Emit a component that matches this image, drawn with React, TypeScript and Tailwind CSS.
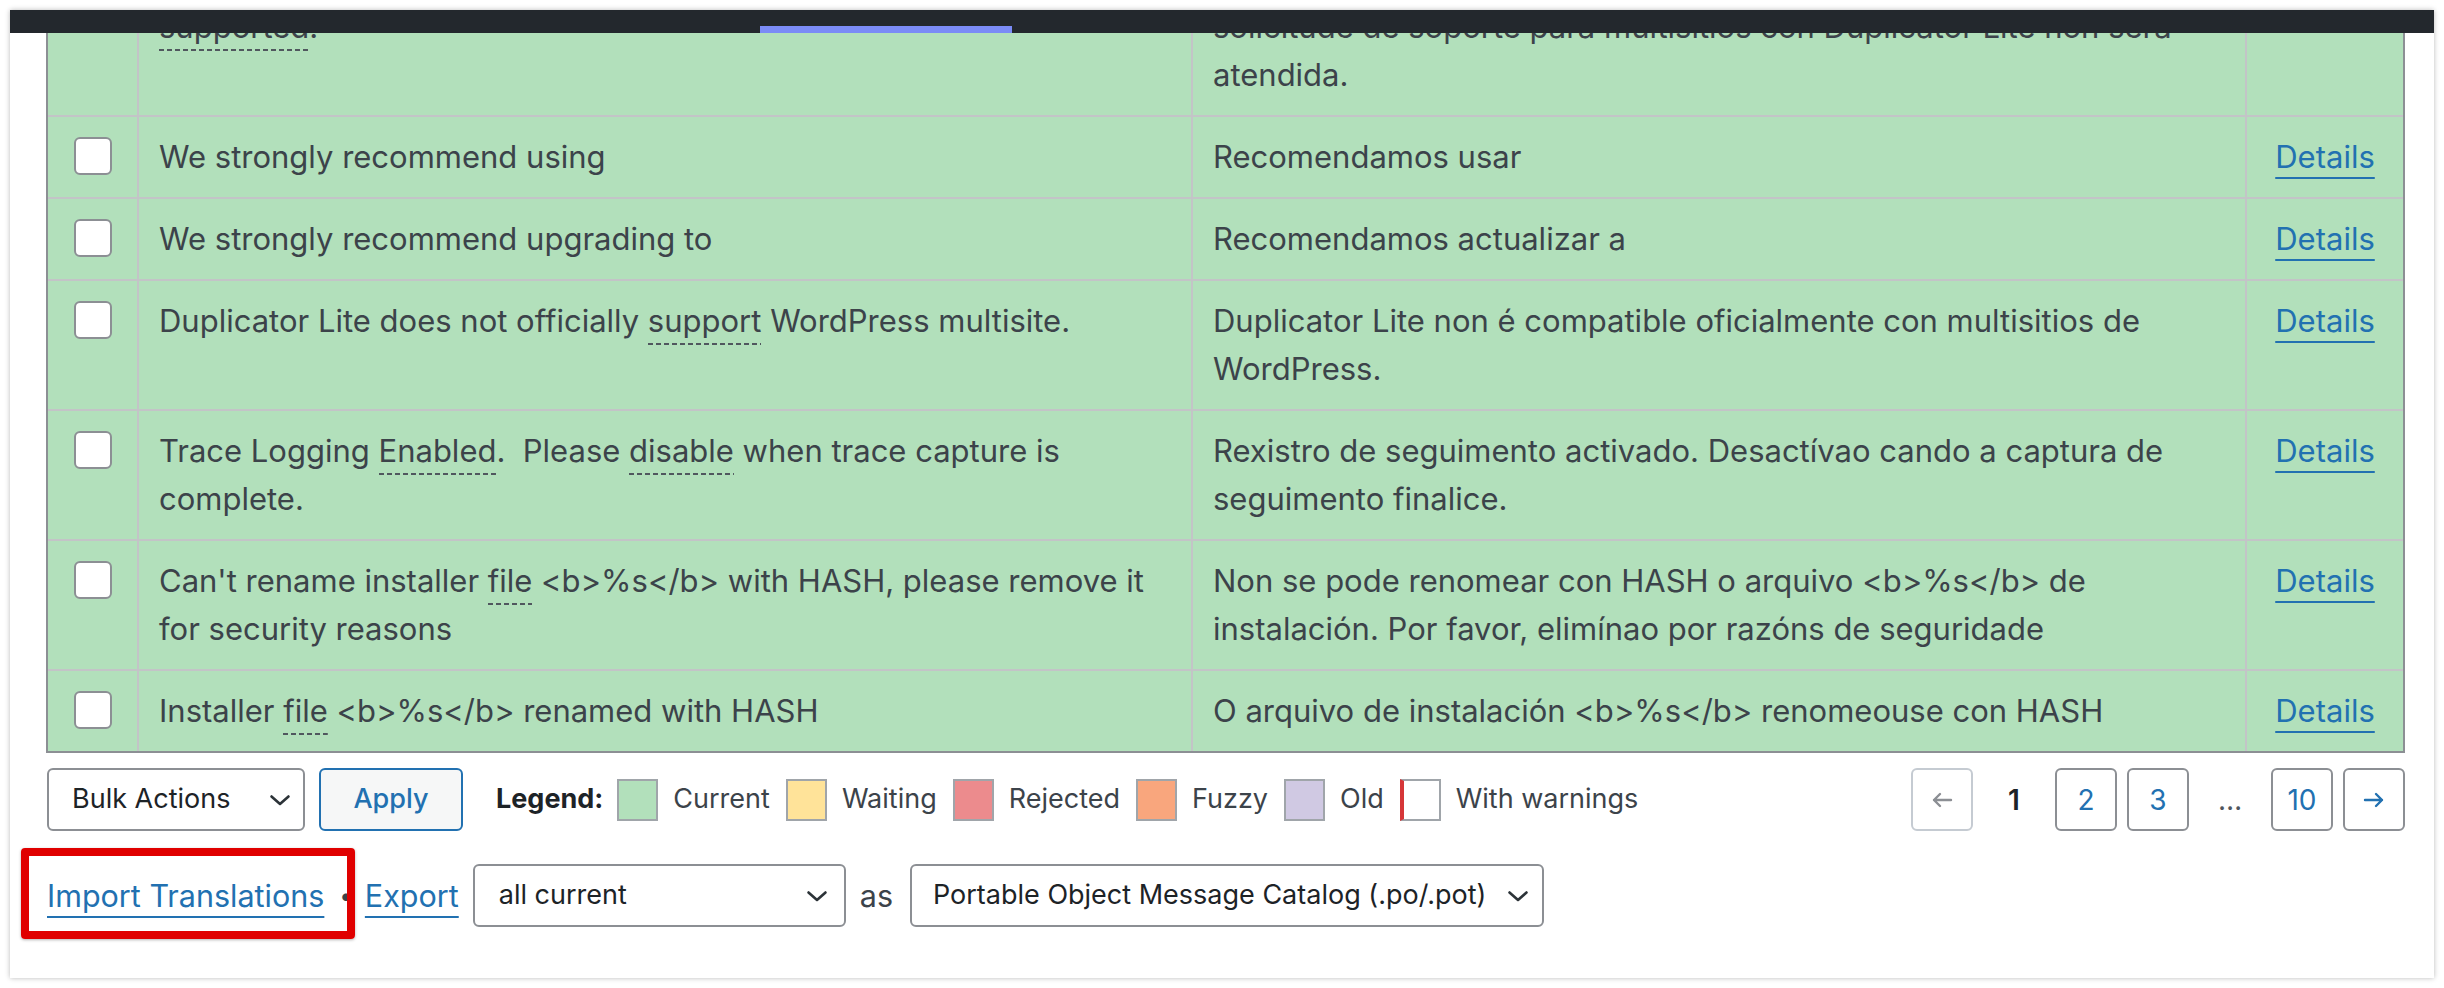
import React from 'react';

// Glossary term: dotted line under the word
const Term = ({ children }: { children: React.ReactNode }) => (
  <span className="pb-[6px] bg-no-repeat bg-bottom [background-size:100%_2px] [background-image:repeating-linear-gradient(to_right,#50575e_0_5px,transparent_5px_8px)]">
    {children}
  </span>
);

const Checkbox = () => (
  <div className="h-[38px] w-[38px] rounded-[6px] border-2 border-[#8c8f94] bg-white" />
);

const Chevron = () => (
  <svg width="22" height="12" viewBox="0 0 22 12" fill="none" stroke="#2c3338" strokeWidth="2.6" strokeLinecap="round" strokeLinejoin="round">
    <path d="M2.5 2.5 L11 10 L19.5 2.5" />
  </svg>
);

const Arrow = ({ dir, color }: { dir: 'left' | 'right'; color: string }) => (
  <svg width="22" height="16" viewBox="0 0 22 16" fill="none" stroke={color} strokeWidth="2.4" strokeLinecap="round" strokeLinejoin="round">
    {dir === 'left' ? <path d="M20 8 H3 M9 2 L3 8 L9 14" /> : <path d="M2 8 H19 M13 2 L19 8 L13 14" />}
  </svg>
);

type Row = {
  original: React.ReactNode;
  translation: React.ReactNode;
  details: boolean;
};

const rows: Row[] = [
  {
    original: (
      <>
        Support requests for multisite with Duplicator Lite are not
        <br />
        <Term>supported</Term>.
      </>
    ),
    translation: (
      <>
        Duplicator Lite non admite oficialmente multisitio. Calquera
        <br />
        solicitude de soporte para multisitios con Duplicator Lite non será
        <br />
        atendida.
      </>
    ),
    details: false,
  },
  { original: 'We strongly recommend using', translation: 'Recomendamos usar', details: true },
  { original: 'We strongly recommend upgrading to', translation: 'Recomendamos actualizar a', details: true },
  {
    original: (
      <>
        Duplicator Lite does not officially <Term>support</Term> WordPress multisite.
      </>
    ),
    translation: (
      <>
        Duplicator Lite non é compatible oficialmente con multisitios de
        <br />
        WordPress.
      </>
    ),
    details: true,
  },
  {
    original: (
      <>
        Trace Logging <Term>Enabled</Term>.{'\u00a0 '}Please <Term>disable</Term> when trace capture is
        <br />
        complete.
      </>
    ),
    translation: (
      <>
        Rexistro de seguimento activado. Desactívao cando a captura de
        <br />
        seguimento finalice.
      </>
    ),
    details: true,
  },
  {
    original: (
      <>
        Can't rename installer <Term>file</Term> {'<b>%s</b>'} with HASH, please remove it
        <br />
        for security reasons
      </>
    ),
    translation: (
      <>
        Non se pode renomear con HASH o arquivo {'<b>%s</b>'} de
        <br />
        instalación. Por favor, elimínao por razóns de seguridade
      </>
    ),
    details: true,
  },
  {
    original: (
      <>
        Installer <Term>file</Term> {'<b>%s</b>'} renamed with HASH
      </>
    ),
    translation: <>O arquivo de instalación {'<b>%s</b>'} renomeouse con HASH</>,
    details: true,
  },
];

const legend = [
  { label: 'Current', swatch: 'bg-[#b2e0bb]' },
  { label: 'Waiting', swatch: 'bg-[#ffe399]' },
  { label: 'Rejected', swatch: 'bg-[#ec8b8d]' },
  { label: 'Fuzzy', swatch: 'bg-[#f9a67d]' },
  { label: 'Old', swatch: 'bg-[#d0c9e3]' },
];

export default function App() {
  return (
    <div className="h-[988px] w-[2444px] bg-white pl-[10px] pt-[10px] [font-family:Inter,'Noto_Sans',sans-serif]">
      <div className="relative flex h-[968px] w-[2424px] flex-col overflow-hidden bg-white shadow-[0_0_5px_rgba(0,0,0,0.28)]">
        {/* sticky admin header */}
        <div className="flex h-[23px] shrink-0 items-end bg-[#23282d]">
          <div className="ml-[750px] h-[7px] w-[252px] bg-[#7b8cf6]" />
        </div>

        {/* translations table (scrolled) */}
        <div className="ml-[36px] mr-[29px] h-[720px] shrink-0 overflow-hidden border-x-2 border-b-2 border-[#8c8f94]">
          <div className="mt-[-94px]">
            {rows.map((row, i) => (
              <div
                key={i}
                className={`flex bg-[#b2e0bb] text-[31px] leading-[48px] text-[#3c434a] ${
                  i === rows.length - 1 ? '' : 'border-b-2 border-[#c3c4c7]'
                }`}
              >
                <div className="flex w-[91px] shrink-0 justify-center border-r-2 border-[#c3c4c7] pt-[20px]">
                  <Checkbox />
                </div>
                <div className="w-[1054px] shrink-0 border-r-2 border-[#c3c4c7] px-[20px] py-[16px]">
                  {row.original}
                </div>
                <div className="w-[1054px] shrink-0 border-r-2 border-[#c3c4c7] px-[20px] py-[16px]">
                  {row.translation}
                </div>
                <div className="flex-1 py-[16px] text-center">
                  {row.details && (
                    <a className="text-[#2271b1] underline decoration-2 underline-offset-[9px]">Details</a>
                  )}
                </div>
              </div>
            ))}
          </div>
        </div>

        {/* bulk actions, legend, paging */}
        <div className="ml-[37px] mr-[29px] mt-[15px] flex h-[63px] shrink-0 items-center text-[27px]">
          <div className="flex h-[63px] w-[258px] items-center justify-between rounded-[6px] border-2 border-[#8c8f94] bg-white pl-[23px] pr-[12px] text-[#1d2327]">
            <span>Bulk Actions</span>
            <Chevron />
          </div>
          <button className="ml-[14px] h-[63px] w-[144px] rounded-[6px] border-2 border-[#2271b1] bg-[#f6f7f7] font-medium text-[#2271b1]">
            Apply
          </button>
          <div className="ml-[33px] flex items-center text-[#3c434a]">
            <span className="mr-[14px] font-bold text-[#1d2327]">Legend:</span>
            {legend.map((item) => (
              <div key={item.label} className="mr-[16px] flex items-center">
                <div className={`h-[42px] w-[41px] border-2 border-[#a0a5aa] ${item.swatch}`} />
                <span className="ml-[15px]">{item.label}</span>
              </div>
            ))}
            <div className="flex items-center">
              <div className="h-[42px] w-[41px] border-2 border-l-[4px] border-[#a0a5aa] border-l-[#d63638] bg-white" />
              <span className="ml-[15px]">With warnings</span>
            </div>
          </div>

          <div className="ml-auto flex items-center gap-[10px] text-[28px]">
            <div className="flex h-[63px] w-[62px] items-center justify-center rounded-[6px] border-2 border-[#c5cbd2]">
              <Arrow dir="left" color="#8c8f94" />
            </div>
            <div className="flex h-[63px] w-[62px] items-center justify-center font-semibold text-[#1d2327]">1</div>
            <div className="flex h-[63px] w-[62px] items-center justify-center rounded-[6px] border-2 border-[#8c8f94] text-[#2271b1]">2</div>
            <div className="flex h-[63px] w-[62px] items-center justify-center rounded-[6px] border-2 border-[#8c8f94] text-[#2271b1]">3</div>
            <div className="flex h-[63px] w-[62px] items-center justify-center text-[#50575e]">…</div>
            <div className="flex h-[63px] w-[62px] items-center justify-center rounded-[6px] border-2 border-[#8c8f94] text-[#2271b1]">10</div>
            <div className="flex h-[63px] w-[62px] items-center justify-center rounded-[6px] border-2 border-[#8c8f94]">
              <Arrow dir="right" color="#2271b1" />
            </div>
          </div>
        </div>

        {/* import / export */}
        <div className="ml-[37px] mt-[33px] flex h-[63px] shrink-0 items-center text-[30.5px] text-[#3c434a]">
          <a className="text-[#2271b1] underline decoration-2 underline-offset-[9px]">Import Translations</a>
          <span className="ml-[15px] text-[24px]">•</span>
          <a className="ml-[12px] text-[#2271b1] underline decoration-2 underline-offset-[9px]">Export</a>
          <div className="ml-[14px] flex h-[63px] w-[373px] items-center justify-between rounded-[6px] border-2 border-[#8c8f94] bg-white pl-[24px] pr-[16px] text-[27px] text-[#1d2327]">
            <span>all current</span>
            <Chevron />
          </div>
          <span className="ml-[14px]">as</span>
          <div className="ml-[17px] flex h-[63px] w-[634px] items-center justify-between rounded-[6px] border-2 border-[#8c8f94] bg-white pl-[21px] pr-[13px] text-[27px] text-[#1d2327]">
            <span>Portable Object Message Catalog (.po/.pot)</span>
            <Chevron />
          </div>
        </div>

        {/* annotation box */}
        <div className="pointer-events-none absolute left-[11px] top-[838px] h-[91px] w-[334px] rounded-[4px] border-[8px] border-[#e00000] shadow-[0_1px_3px_rgba(0,0,0,0.3)]" />
      </div>
    </div>
  );
}
